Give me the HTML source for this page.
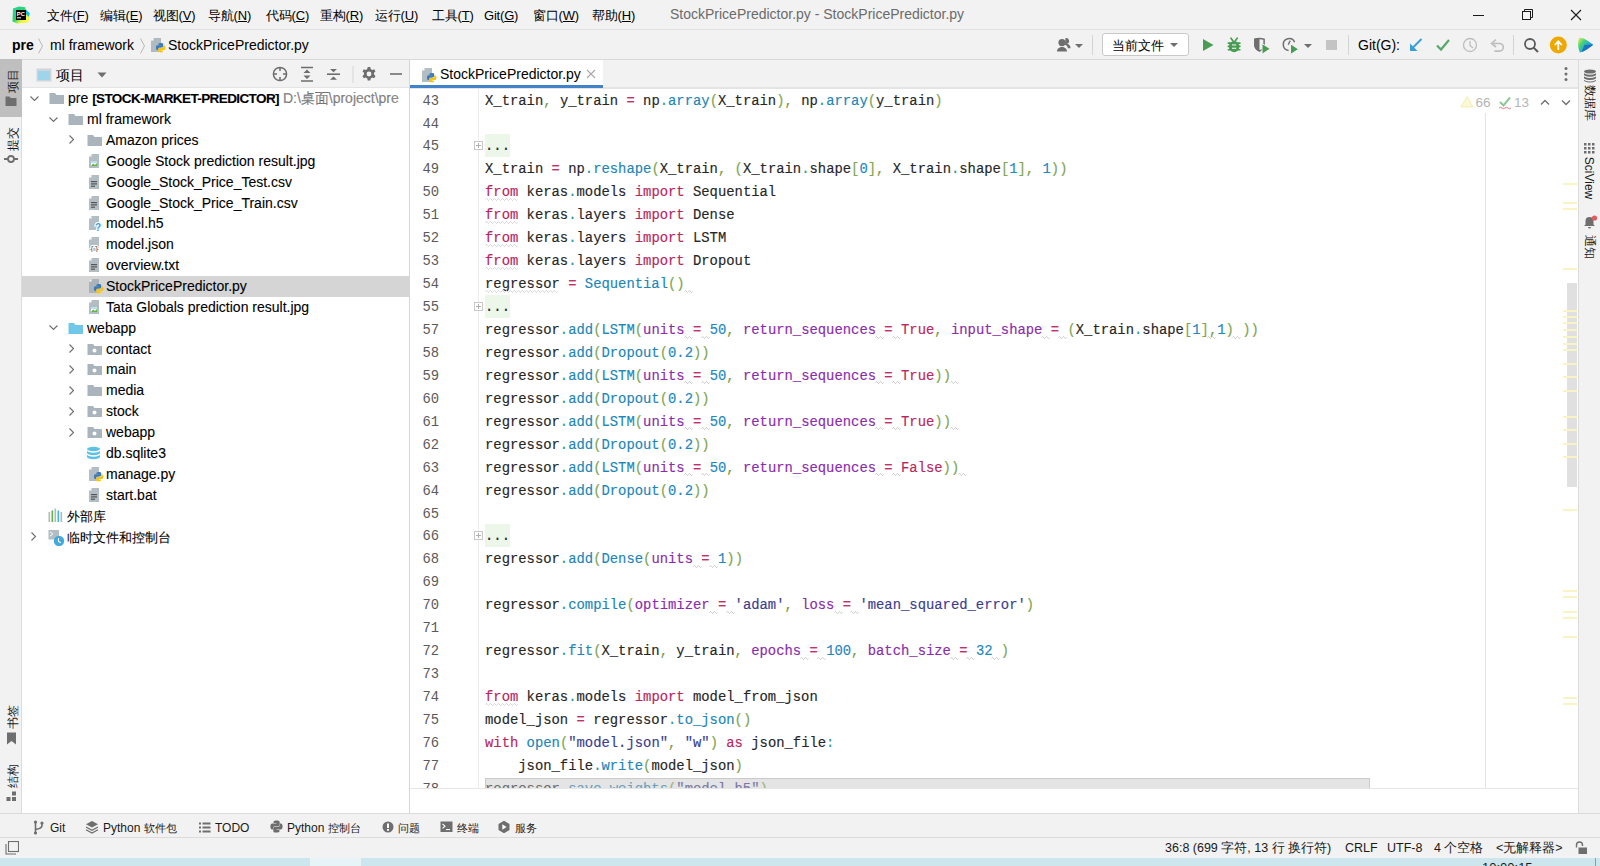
<!DOCTYPE html>
<html><head><meta charset="utf-8">
<style>
*{box-sizing:border-box;margin:0;padding:0}
html,body{width:1600px;height:866px;overflow:hidden;background:#f2f2f2;font-family:"Liberation Sans",sans-serif;font-size:14px;color:#000}
.abs{position:absolute}
#title{left:0;top:0;width:1600px;height:30px;background:#f2f2f2;border-bottom:1px solid #e1e1e1}
#nav{left:0;top:30px;width:1600px;height:30px;background:#f2f2f2;border-bottom:1px solid #d9d9d9}
#lstrip{left:0;top:60px;width:22px;height:754px;background:#f2f2f2;border-right:1px solid #dcdcdc}
#proj{left:22px;top:60px;width:388px;height:754px;background:#fff;border-right:1px solid #d6d6d6}
#projhead{left:0;top:0;width:387px;height:28px;background:#f2f2f2;border-bottom:1px solid #e4e4e4}
#tabs{left:410px;top:60px;width:1168px;height:28px;background:#f2f2f2;border-bottom:1px solid #e4e4e4}
#editor{left:410px;top:88px;width:1168px;height:726px;background:#fff}
#rstrip{left:1578px;top:60px;width:22px;height:754px;background:#f2f2f2;border-left:1px solid #dcdcdc}
#bbar{left:0;top:813px;width:1600px;height:25px;background:#f2f2f2;border-top:1px solid #dcdcdc;border-bottom:1px solid #dcdcdc}
#status{left:0;top:838px;width:1600px;height:20px;background:#f2f2f2}
#taskbar{left:0;top:858px;width:1600px;height:8px;background:#cde6ee}
.menu span{position:absolute;top:8px;font-size:13px;line-height:16px;color:#000;letter-spacing:-0.2px}
.menu u{text-decoration:underline;text-underline-offset:1px}
#wtitle{font-size:14px;color:#6b6b6b;line-height:16px}
.navt{top:7px;font-size:14px;line-height:16px;color:#000}
.tr{font-size:14px;line-height:18px;color:#000;white-space:nowrap;-webkit-text-stroke:0.1px #000}
.ln{position:absolute;left:0;width:29px;text-align:right;font-family:"Liberation Mono",monospace;font-size:13.83px;line-height:22.9px;color:#5a5a5a}
.cl{position:absolute;left:75px;white-space:pre;font-family:"Liberation Mono",monospace;font-size:13.86px;line-height:22.9px;color:#262626;-webkit-text-stroke:0.15px currentColor}
.fold{position:absolute;left:75px;width:25px;height:23px;background:#ecf7ea}
.k{color:#b8265e}.f{color:#2086b8}.p{color:#8a2cac}.n{color:#1e88c0}.s{color:#3b3d8e}.o{color:#c0306a}.d{color:#2a9a9a}.c{color:#7d9a3c}.b{color:#7fa650}
.w{font-style:normal;text-decoration:underline wavy #b8b8b8;text-decoration-thickness:1px;text-underline-offset:3px}
.wf{text-decoration:underline wavy #c8c8c8;text-decoration-thickness:1px;text-underline-offset:3px}
.vl,.vr{display:flex;align-items:center;justify-content:center}
.vl span,.vr span{white-space:nowrap;font-size:11.5px;line-height:14px;color:#1a1a1a;display:block}
.vl span{transform:rotate(-90deg)}
.vr span{transform:rotate(90deg)}
.bt{top:5.5px;font-size:12px;line-height:16px;color:#1a1a1a;white-space:nowrap}
.st{top:2px;font-size:12.5px;line-height:16px;color:#1a1a1a;white-space:nowrap}
.cj{font-size:11px}
.st .cj{font-size:12.6px}
#taskbar{overflow:hidden}
</style></head><body>
<div id="title" class="abs">
<svg class="abs" style="left:11px;top:5px" width="20" height="20" viewBox="0 0 20 20">
<defs><linearGradient id="pcg" x1="0.1" y1="0.2" x2="0.8" y2="0.9"><stop offset="0" stop-color="#21d789"/><stop offset="0.45" stop-color="#2bd36a"/><stop offset="0.75" stop-color="#e8f53c"/><stop offset="1" stop-color="#fcf84a"/></linearGradient></defs>
<path d="M2 3.5 L8 1.5 L13.5 2.2 L14 1.8 L14.8 5 L18.5 8.5 L18.2 14.5 L17 17.8 L8 18.2 L6.5 18.8 L1.5 16.5 Z" fill="url(#pcg)"/>
<path d="M15 4.5 L18.8 8.5 L17.5 12 L15 9z" fill="#07c3f2"/>
<rect x="5" y="5" width="10" height="10" fill="#000"/>
<text x="5.8" y="10.6" font-family="Liberation Sans" font-weight="bold" font-size="5.8" fill="#fff">PC</text>
<rect x="6" y="12.3" width="4" height="1" fill="#fff"/>
</svg>
<div class="menu">
<span style="left:47px">文件(<u>F</u>)</span>
<span style="left:100px">编辑(<u>E</u>)</span>
<span style="left:153px">视图(<u>V</u>)</span>
<span style="left:208px">导航(<u>N</u>)</span>
<span style="left:266px">代码(<u>C</u>)</span>
<span style="left:320px">重构(<u>R</u>)</span>
<span style="left:375px">运行(<u>U</u>)</span>
<span style="left:432px">工具(<u>T</u>)</span>
<span style="left:484px">Git(<u>G</u>)</span>
<span style="left:533px">窗口(<u>W</u>)</span>
<span style="left:592px">帮助(<u>H</u>)</span>
</div>
<span class="abs" id="wtitle" style="left:670px;top:6px">StockPricePredictor.py - StockPricePredictor.py</span>
<svg class="abs" style="left:1470px;top:5px" width="120" height="20" viewBox="0 0 120 20">
<line x1="3" y1="10.5" x2="14" y2="10.5" stroke="#1a1a1a" stroke-width="1"/>
<rect x="52.5" y="6.5" width="8" height="8" fill="none" stroke="#1a1a1a" stroke-width="1"/>
<path d="M54.5 6.5 V4.5 H62.5 V12.5 H60.5" fill="none" stroke="#1a1a1a" stroke-width="1"/>
<path d="M101 5 L111 15 M111 5 L101 15" stroke="#1a1a1a" stroke-width="1.1"/>
</svg>
</div>
<div id="nav" class="abs">
<span class="abs navt" style="left:12px;font-weight:bold">pre</span>
<svg class="abs" style="left:37px;top:7px" width="8" height="18" viewBox="0 0 8 18"><path d="M1.5 1.5 L5.5 9 L1.5 16.5" fill="none" stroke="#b8b8b8" stroke-width="1"/></svg>
<span class="abs navt" style="left:50px">ml framework</span>
<svg class="abs" style="left:139px;top:7px" width="8" height="18" viewBox="0 0 8 18"><path d="M1.5 1.5 L5.5 9 L1.5 16.5" fill="none" stroke="#b8b8b8" stroke-width="1"/></svg>
<svg class="abs" style="left:150px;top:7px" width="16" height="16" viewBox="0 0 16 16"><path d="M3.5 1 H11 V15 H1 V3.5 Z" fill="#9aa7b0" opacity="0.75"/><path d="M1 3.5 L3.5 1 V3.5 Z" fill="#fff"/><g transform="translate(5.6 5.6) scale(0.64)"><path d="M7.9 0.5C4.1 0.5 4.4 2.1 4.4 2.1V3.8H8V4.3H3C3 4.3 0.5 4 0.5 7.9C0.5 11.7 2.7 11.6 2.7 11.6H4V9.8C4 9.8 3.9 7.6 6.2 7.6H9.8C9.8 7.6 11.9 7.6 11.9 5.6V2.3C11.9 2.3 12.2 0.5 7.9 0.5Z" fill="#3d7ab8"/><path d="M8.1 15.5C11.9 15.5 11.6 13.9 11.6 13.9V12.2H8V11.7H13C13 11.7 15.5 12 15.5 8.1C15.5 4.3 13.3 4.4 13.3 4.4H12V6.2C12 6.2 12.1 8.4 9.8 8.4H6.2C6.2 8.4 4.1 8.4 4.1 10.4V13.7C4.1 13.7 3.8 15.5 8.1 15.5Z" fill="#f4c51c"/></g></svg>
<span class="abs navt" style="left:168px">StockPricePredictor.py</span>
<svg class="abs" style="left:1055px;top:36px;top:6px" width="30" height="18" viewBox="0 0 30 18">
<path d="M7 3 a3.6 3.6 0 0 1 0 7.2 a3.6 3.6 0 0 1 0 -7.2z M2 15.5 c0-3 2.5-4.5 5-4.5 s5 1.5 5 4.5z" fill="#6e6e6e"/>
<path d="M10.5 2 a3 3 0 0 1 1.5 5.8 c2.2 0.6 3.5 2 3.5 4.5 h-2.5 c-0.5-2-1.5-3-3-3.5z" fill="#6e6e6e"/>
<path d="M20 8 h8 l-4 4z" fill="#6e6e6e"/>
</svg>
<div class="abs" style="left:1092px;top:5px;width:1px;height:20px;background:#d4d4d4"></div>
<div class="abs" style="left:1102px;top:3px;width:87px;height:23px;background:#fff;border:1px solid #c9c9c9;border-radius:3px"></div>
<span class="abs" style="left:1112px;top:8px;font-size:13px;line-height:16px;color:#000">当前文件</span>
<svg class="abs" style="left:1169px;top:12px" width="10" height="6" viewBox="0 0 10 6"><path d="M1 1 h8 l-4 4z" fill="#6e6e6e"/></svg>
<svg class="abs" style="left:1200px;top:6px" width="120" height="18" viewBox="0 0 120 18">
<path d="M3 3 L13.5 9 L3 15z" fill="#499c54"/>
<g fill="#499c54"><ellipse cx="34.1" cy="10.6" rx="5.3" ry="5.6"/><rect x="27.5" y="6.3" width="13.2" height="1.7" rx=".8"/><rect x="27.5" y="9.6" width="13.2" height="1.7" rx=".8"/><rect x="27.5" y="12.9" width="13.2" height="1.7" rx=".8"/></g>
<path d="M31 2.2 L33.2 5.2 M37.2 2.2 L35 5.2" stroke="#499c54" stroke-width="1.7" stroke-linecap="round"/>
<rect x="32" y="8.4" width="4.2" height="1.1" fill="#f2f2f2"/><rect x="32" y="11.7" width="4.2" height="1.1" fill="#f2f2f2"/>
<path d="M54.9 3.3 Q59.5 1.9 64.1 3.3 V9.3 Q63.9 13.3 59.5 15 Q55.1 13.3 54.9 9.3 Z" fill="none" stroke="#6e6e6e" stroke-width="1.5"/>
<path d="M54.2 2.8 Q57 2 59.5 1.9 V15.6 Q54.5 13.6 54.2 9.3Z" fill="#6e6e6e"/>
<path d="M62 7.5 L70.3 12.8 L62 18.2z" fill="#499c54" stroke="#f2f2f2" stroke-width="1"/>
</svg>
<svg class="abs" style="left:1280px;top:6px" width="60" height="20" viewBox="0 0 60 20">
<path d="M14.6 6.2 A5.9 5.9 0 1 0 8.6 14.4" fill="none" stroke="#6e6e6e" stroke-width="1.5"/>
<path d="M10.2 4.6 L8.2 8.8" fill="none" stroke="#6e6e6e" stroke-width="1.3"/>
<path d="M10.5 7.8 L18.6 13.2 L10.5 18.4z" fill="#499c54" stroke="#f2f2f2" stroke-width="1"/>
<path d="M24 8 h8 l-4 4z" fill="#6e6e6e"/>
<rect x="46" y="4" width="11" height="10" fill="#c4c4c4"/>
</svg>
<div class="abs" style="left:1348px;top:5px;width:1px;height:20px;background:#d4d4d4"></div>
<span class="abs navt" style="left:1358px">Git(G):</span>
<svg class="abs" style="left:1405px;top:6px" width="110" height="18" viewBox="0 0 110 18">
<path d="M16.5 3 L7 12.5" stroke="#389fd6" stroke-width="2"/><path d="M5 7.5 V15 H12.5z" fill="#389fd6"/>
<path d="M32 9.5 L36 13.5 L44 4" fill="none" stroke="#59a869" stroke-width="2.2"/>
<circle cx="65" cy="9" r="6.5" fill="none" stroke="#bdbdbd" stroke-width="1.3"/><path d="M65 5 V9.5 L68 12" fill="none" stroke="#bdbdbd" stroke-width="1.3"/>
<path d="M88 7.5 h6.5 a3.8 3.8 0 0 1 0 7.6 h-5" fill="none" stroke="#bdbdbd" stroke-width="1.6"/><path d="M91 3.5 L86.5 7.5 L91 11" fill="none" stroke="#bdbdbd" stroke-width="1.6"/>
</svg>
<div class="abs" style="left:1513px;top:5px;width:1px;height:20px;background:#d4d4d4"></div>
<svg class="abs" style="left:1520px;top:5px" width="80" height="20" viewBox="0 0 80 20">
<circle cx="10" cy="9" r="5" fill="none" stroke="#5a5a5a" stroke-width="1.8"/><path d="M13.5 12.5 L18 17" stroke="#5a5a5a" stroke-width="2"/>
<circle cx="38.3" cy="10" r="8.5" fill="#eea800"/><path d="M38.3 15 V6.5 M34.8 10 L38.3 6.3 L41.8 10" fill="none" stroke="#fff" stroke-width="1.8"/>
<defs><linearGradient id="lg2" x1="0" y1="0" x2="1" y2="0.8"><stop offset="0" stop-color="#f5f24a"/><stop offset="0.35" stop-color="#46d07c"/><stop offset="0.7" stop-color="#1aa6d6"/><stop offset="1" stop-color="#1560c8"/></linearGradient></defs>
<path d="M59.2 2.8 C63.5 2.5 68.5 6 73.2 9.8 C68.5 13.5 63.5 17.2 59.8 17.4 C57.6 12.5 57.4 7.2 59.2 2.8Z" fill="url(#lg2)"/>
<path d="M64.5 9.8 L73.2 9.8 C69 13 65 16 61.5 17.2Z" fill="#1b5fc0" opacity="0.75"/>
</svg>
</div>
<div id="lstrip" class="abs">
<div class="abs" style="left:0;top:-1px;width:22px;height:58px;background:#bfbfbf"></div>
<div class="abs vl" style="left:5px;top:9px;width:15px;height:24px"><span>项目</span></div>
<svg class="abs" style="left:5px;top:35px" width="12" height="12" viewBox="0 0 12 12"><path d="M0.5 1.5 H4.5 L5.5 3 H11.5 V11 H0.5z" fill="#6e6e6e"/></svg>
<div class="abs vl" style="left:5px;top:67px;width:15px;height:24px"><span>提交</span></div>
<svg class="abs" style="left:4px;top:93px" width="14" height="12" viewBox="0 0 14 12"><circle cx="7" cy="6" r="3" fill="none" stroke="#6e6e6e" stroke-width="1.8"/><path d="M0 6 H4 M10 6 H14" stroke="#6e6e6e" stroke-width="1.8"/></svg>
<div class="abs vl" style="left:5px;top:645px;width:15px;height:24px"><span>书签</span></div>
<svg class="abs" style="left:6px;top:672px" width="11" height="13" viewBox="0 0 11 13"><path d="M1 0.5 H10 V12.5 L5.5 9 L1 12.5z" fill="#6e6e6e"/></svg>
<div class="abs vl" style="left:5px;top:704px;width:15px;height:24px"><span>结构</span></div>
<svg class="abs" style="left:6px;top:731px" width="11" height="11" viewBox="0 0 11 11"><rect x="6" y="0.5" width="4" height="4" fill="#6e6e6e"/><rect x="0.5" y="6" width="4" height="4" fill="#6e6e6e"/><rect x="6" y="6" width="4" height="4" fill="#6e6e6e"/></svg>
</div>
<div id="proj" class="abs"><div id="projhead" class="abs">
<svg class="abs" style="left:14px;top:8px" width="16" height="14" viewBox="0 0 16 14"><rect x="0.5" y="0.5" width="15" height="13" fill="#cfd5d9"/><rect x="2" y="3" width="12" height="9" fill="#9fd5ea"/></svg>
<span class="abs" style="left:34px;top:7px;font-size:14px;line-height:16px">项目</span>
<svg class="abs" style="left:75px;top:12px" width="10" height="6" viewBox="0 0 10 6"><path d="M0.5 0.5 h9 l-4.5 5z" fill="#6e6e6e"/></svg>
<svg class="abs" style="left:248px;top:5px" width="139" height="20" viewBox="0 0 139 20">
<circle cx="10" cy="9" r="6.6" fill="none" stroke="#6e6e6e" stroke-width="1.5"/><path d="M10 2.5 V6 M10 12 V15.5 M3.5 9 H7 M13 9 H16.5" stroke="#6e6e6e" stroke-width="1.5"/>
<path d="M31 2.5 H43 M31 16 H43" stroke="#6e6e6e" stroke-width="1.6"/><path d="M33.5 8 L37 4.5 L40.5 8z M33.5 10.5 L37 14 L40.5 10.5z" fill="#6e6e6e"/>
<path d="M57 9.2 H70" stroke="#6e6e6e" stroke-width="1.6"/><path d="M60 4 L63.5 7.2 L67 4z M60 14.8 L63.5 11.6 L67 14.8z" fill="#6e6e6e"/>
<rect x="82.5" y="1" width="1" height="17" fill="#d6d6d6"/>
<g transform="translate(99 9)"><path d="M-1.3 -7 h2.6 l0.4 2 l1.6 0.9 l1.9 -0.7 l1.3 2.2 l-1.5 1.4 v1.8 l1.5 1.4 l-1.3 2.2 l-1.9 -0.7 l-1.6 0.9 l-0.4 2 h-2.6 l-0.4 -2 l-1.6 -0.9 l-1.9 0.7 l-1.3 -2.2 l1.5 -1.4 v-1.8 l-1.5 -1.4 l1.3 -2.2 l1.9 0.7 l1.6 -0.9z" fill="#6e6e6e"/><circle r="2.4" fill="#f3f3f3"/></g>
<path d="M120 9 H132" stroke="#6e6e6e" stroke-width="1.6"/>
</svg>
</div>
<div class="abs" style="left:0;top:0;width:387px;height:754px;overflow:hidden">
<div class="abs" style="left:0;top:216.3px;width:387px;height:20.86px;background:#d5d5d5"></div>
<svg class="abs" style="left:7.0px;top:32.7px" width="11" height="11" viewBox="0 0 11 11"><path d="M1.5 3.5 L5.5 7.5 L9.5 3.5" fill="none" stroke="#6e6e6e" stroke-width="1.1"/></svg>
<svg class="abs" style="left:27px;top:32.2px" width="16" height="13" viewBox="0 0 16 13"><path d="M0.5 1 H6 L7.5 3 H15 V12 H0.5 Z" fill="#9aa7b0" opacity="0.85"/></svg>
<span class="abs tr" style="left:46px;top:29.2px">pre <b style="font-size:13.5px;letter-spacing:-0.6px">[STOCK-MARKET-PREDICTOR]</b> <span style="color:#8c8c8c">D:\桌面\project\pre</span></span>
<svg class="abs" style="left:26.0px;top:53.6px" width="11" height="11" viewBox="0 0 11 11"><path d="M1.5 3.5 L5.5 7.5 L9.5 3.5" fill="none" stroke="#6e6e6e" stroke-width="1.1"/></svg>
<svg class="abs" style="left:46px;top:53.1px" width="16" height="13" viewBox="0 0 16 13"><path d="M0.5 1 H6 L7.5 3 H15 V12 H0.5 Z" fill="#9aa7b0" opacity="0.85"/></svg>
<span class="abs tr" style="left:65px;top:50.1px">ml framework</span>
<svg class="abs" style="left:43.5px;top:74.4px" width="11" height="11" viewBox="0 0 11 11"><path d="M3.5 1.5 L7.5 5.5 L3.5 9.5" fill="none" stroke="#6e6e6e" stroke-width="1.1"/></svg>
<svg class="abs" style="left:65px;top:73.9px" width="16" height="13" viewBox="0 0 16 13"><path d="M0.5 1 H6 L7.5 3 H15 V12 H0.5 Z" fill="#9aa7b0" opacity="0.85"/></svg>
<span class="abs tr" style="left:84px;top:70.9px">Amazon prices</span>
<svg class="abs" style="left:66px;top:92.8px" width="16" height="16" viewBox="0 0 16 16"><path d="M3.5 1 H11 V15 H1 V3.5 Z" fill="#9aa7b0" opacity="0.75"/><path d="M1 3.5 L3.5 1 V3.5 Z" fill="#fff"/><rect x="3" y="8" width="6" height="5" fill="#fff"/><path d="M3 13 L5 10.5 L7 12 L9 10 V13Z" fill="#62b543"/><rect x="3" y="8" width="6" height="2" fill="#b8e0f0"/></svg>
<span class="abs tr" style="left:84px;top:91.8px">Google Stock prediction result.jpg</span>
<svg class="abs" style="left:66px;top:113.6px" width="16" height="16" viewBox="0 0 16 16"><path d="M3.5 1 H11 V15 H1 V3.5 Z" fill="#9aa7b0" opacity="0.75"/><path d="M1 3.5 L3.5 1 V3.5 Z" fill="#fff"/><rect x="3" y="7" width="6" height="1.2" fill="#555"/><rect x="3" y="9.3" width="6" height="1.2" fill="#555"/><rect x="3" y="11.6" width="4" height="1.2" fill="#555"/></svg>
<span class="abs tr" style="left:84px;top:112.6px">Google_Stock_Price_Test.csv</span>
<svg class="abs" style="left:66px;top:134.5px" width="16" height="16" viewBox="0 0 16 16"><path d="M3.5 1 H11 V15 H1 V3.5 Z" fill="#9aa7b0" opacity="0.75"/><path d="M1 3.5 L3.5 1 V3.5 Z" fill="#fff"/><rect x="3" y="7" width="6" height="1.2" fill="#555"/><rect x="3" y="9.3" width="6" height="1.2" fill="#555"/><rect x="3" y="11.6" width="4" height="1.2" fill="#555"/></svg>
<span class="abs tr" style="left:84px;top:133.5px">Google_Stock_Price_Train.csv</span>
<svg class="abs" style="left:66px;top:155.4px" width="16" height="16" viewBox="0 0 16 16"><path d="M3.5 1 H11 V15 H1 V3.5 Z" fill="#9aa7b0" opacity="0.75"/><path d="M1 3.5 L3.5 1 V3.5 Z" fill="#fff"/><text x="7" y="15.5" font-family="Liberation Sans" font-size="10" font-weight="bold" fill="#fff" stroke="#fff" stroke-width="2">?</text><text x="7" y="15.5" font-family="Liberation Sans" font-size="10" font-weight="bold" fill="#389fd6">?</text></svg>
<span class="abs tr" style="left:84px;top:154.4px">model.h5</span>
<svg class="abs" style="left:66px;top:176.2px" width="16" height="16" viewBox="0 0 16 16"><path d="M3.5 1 H11 V15 H1 V3.5 Z" fill="#9aa7b0" opacity="0.75"/><path d="M1 3.5 L3.5 1 V3.5 Z" fill="#fff"/><text x="1.5" y="14.5" font-family="Liberation Mono" font-size="8" font-weight="bold" fill="#fff" stroke="#fff" stroke-width="2">{}</text><text x="1.5" y="14.5" font-family="Liberation Mono" font-size="8" fill="#555">{}</text></svg>
<span class="abs tr" style="left:84px;top:175.2px">model.json</span>
<svg class="abs" style="left:66px;top:197.1px" width="16" height="16" viewBox="0 0 16 16"><path d="M3.5 1 H11 V15 H1 V3.5 Z" fill="#9aa7b0" opacity="0.75"/><path d="M1 3.5 L3.5 1 V3.5 Z" fill="#fff"/><rect x="3" y="7" width="6" height="1.2" fill="#555"/><rect x="3" y="9.3" width="6" height="1.2" fill="#555"/><rect x="3" y="11.6" width="4" height="1.2" fill="#555"/></svg>
<span class="abs tr" style="left:84px;top:196.1px">overview.txt</span>
<svg class="abs" style="left:66px;top:217.9px" width="16" height="16" viewBox="0 0 16 16"><path d="M3.5 1 H11 V15 H1 V3.5 Z" fill="#9aa7b0" opacity="0.75"/><path d="M1 3.5 L3.5 1 V3.5 Z" fill="#fff"/><g transform="translate(5.6 5.6) scale(0.64)"><path d="M7.9 0.5C4.1 0.5 4.4 2.1 4.4 2.1V3.8H8V4.3H3C3 4.3 0.5 4 0.5 7.9C0.5 11.7 2.7 11.6 2.7 11.6H4V9.8C4 9.8 3.9 7.6 6.2 7.6H9.8C9.8 7.6 11.9 7.6 11.9 5.6V2.3C11.9 2.3 12.2 0.5 7.9 0.5Z" fill="#3d7ab8"/><path d="M8.1 15.5C11.9 15.5 11.6 13.9 11.6 13.9V12.2H8V11.7H13C13 11.7 15.5 12 15.5 8.1C15.5 4.3 13.3 4.4 13.3 4.4H12V6.2C12 6.2 12.1 8.4 9.8 8.4H6.2C6.2 8.4 4.1 8.4 4.1 10.4V13.7C4.1 13.7 3.8 15.5 8.1 15.5Z" fill="#f4c51c"/></g></svg>
<span class="abs tr" style="left:84px;top:216.9px">StockPricePredictor.py</span>
<svg class="abs" style="left:66px;top:238.8px" width="16" height="16" viewBox="0 0 16 16"><path d="M3.5 1 H11 V15 H1 V3.5 Z" fill="#9aa7b0" opacity="0.75"/><path d="M1 3.5 L3.5 1 V3.5 Z" fill="#fff"/><rect x="3" y="8" width="6" height="5" fill="#fff"/><path d="M3 13 L5 10.5 L7 12 L9 10 V13Z" fill="#62b543"/><rect x="3" y="8" width="6" height="2" fill="#b8e0f0"/></svg>
<span class="abs tr" style="left:84px;top:237.8px">Tata Globals prediction result.jpg</span>
<svg class="abs" style="left:26.0px;top:262.2px" width="11" height="11" viewBox="0 0 11 11"><path d="M1.5 3.5 L5.5 7.5 L9.5 3.5" fill="none" stroke="#6e6e6e" stroke-width="1.1"/></svg>
<svg class="abs" style="left:46px;top:261.7px" width="16" height="13" viewBox="0 0 16 13"><path d="M0.5 1 H6 L7.5 3 H15 V12 H0.5 Z" fill="#40b6e0" opacity="0.75"/></svg>
<span class="abs tr" style="left:65px;top:258.7px">webapp</span>
<svg class="abs" style="left:43.5px;top:283.0px" width="11" height="11" viewBox="0 0 11 11"><path d="M3.5 1.5 L7.5 5.5 L3.5 9.5" fill="none" stroke="#6e6e6e" stroke-width="1.1"/></svg>
<svg class="abs" style="left:65px;top:282.5px" width="16" height="13" viewBox="0 0 16 13"><path d="M0.5 1 H6 L7.5 3 H15 V12 H0.5 Z" fill="#9aa7b0" opacity="0.85"/><circle cx="7.5" cy="7.5" r="2" fill="#fff"/></svg>
<span class="abs tr" style="left:84px;top:279.5px">contact</span>
<svg class="abs" style="left:43.5px;top:303.9px" width="11" height="11" viewBox="0 0 11 11"><path d="M3.5 1.5 L7.5 5.5 L3.5 9.5" fill="none" stroke="#6e6e6e" stroke-width="1.1"/></svg>
<svg class="abs" style="left:65px;top:303.4px" width="16" height="13" viewBox="0 0 16 13"><path d="M0.5 1 H6 L7.5 3 H15 V12 H0.5 Z" fill="#9aa7b0" opacity="0.85"/><circle cx="7.5" cy="7.5" r="2" fill="#fff"/></svg>
<span class="abs tr" style="left:84px;top:300.4px">main</span>
<svg class="abs" style="left:43.5px;top:324.7px" width="11" height="11" viewBox="0 0 11 11"><path d="M3.5 1.5 L7.5 5.5 L3.5 9.5" fill="none" stroke="#6e6e6e" stroke-width="1.1"/></svg>
<svg class="abs" style="left:65px;top:324.2px" width="16" height="13" viewBox="0 0 16 13"><path d="M0.5 1 H6 L7.5 3 H15 V12 H0.5 Z" fill="#9aa7b0" opacity="0.85"/></svg>
<span class="abs tr" style="left:84px;top:321.2px">media</span>
<svg class="abs" style="left:43.5px;top:345.6px" width="11" height="11" viewBox="0 0 11 11"><path d="M3.5 1.5 L7.5 5.5 L3.5 9.5" fill="none" stroke="#6e6e6e" stroke-width="1.1"/></svg>
<svg class="abs" style="left:65px;top:345.1px" width="16" height="13" viewBox="0 0 16 13"><path d="M0.5 1 H6 L7.5 3 H15 V12 H0.5 Z" fill="#9aa7b0" opacity="0.85"/><circle cx="7.5" cy="7.5" r="2" fill="#fff"/></svg>
<span class="abs tr" style="left:84px;top:342.1px">stock</span>
<svg class="abs" style="left:43.5px;top:366.5px" width="11" height="11" viewBox="0 0 11 11"><path d="M3.5 1.5 L7.5 5.5 L3.5 9.5" fill="none" stroke="#6e6e6e" stroke-width="1.1"/></svg>
<svg class="abs" style="left:65px;top:366.0px" width="16" height="13" viewBox="0 0 16 13"><path d="M0.5 1 H6 L7.5 3 H15 V12 H0.5 Z" fill="#9aa7b0" opacity="0.85"/><circle cx="7.5" cy="7.5" r="2" fill="#fff"/></svg>
<span class="abs tr" style="left:84px;top:363.0px">webapp</span>
<svg class="abs" style="left:64px;top:385.8px" width="17" height="17" viewBox="0 0 17 17"><ellipse cx="7.5" cy="3" rx="6.5" ry="2.2" fill="#40b6e0" opacity="0.85"/><path d="M1 4.5 v2.5 a6.5 2.2 0 0 0 13 0 v-2.5 a6.5 2.2 0 0 1 -13 0z" fill="#40b6e0" opacity="0.85"/><path d="M1 8.5 v2.5 a6.5 2.2 0 0 0 13 0 v-2.5 a6.5 2.2 0 0 1 -13 0z" fill="#40b6e0" opacity="0.85"/></svg>
<span class="abs tr" style="left:84px;top:383.8px">db.sqlite3</span>
<svg class="abs" style="left:66px;top:405.7px" width="16" height="16" viewBox="0 0 16 16"><path d="M3.5 1 H11 V15 H1 V3.5 Z" fill="#9aa7b0" opacity="0.75"/><path d="M1 3.5 L3.5 1 V3.5 Z" fill="#fff"/><g transform="translate(5.6 5.6) scale(0.64)"><path d="M7.9 0.5C4.1 0.5 4.4 2.1 4.4 2.1V3.8H8V4.3H3C3 4.3 0.5 4 0.5 7.9C0.5 11.7 2.7 11.6 2.7 11.6H4V9.8C4 9.8 3.9 7.6 6.2 7.6H9.8C9.8 7.6 11.9 7.6 11.9 5.6V2.3C11.9 2.3 12.2 0.5 7.9 0.5Z" fill="#3d7ab8"/><path d="M8.1 15.5C11.9 15.5 11.6 13.9 11.6 13.9V12.2H8V11.7H13C13 11.7 15.5 12 15.5 8.1C15.5 4.3 13.3 4.4 13.3 4.4H12V6.2C12 6.2 12.1 8.4 9.8 8.4H6.2C6.2 8.4 4.1 8.4 4.1 10.4V13.7C4.1 13.7 3.8 15.5 8.1 15.5Z" fill="#f4c51c"/></g></svg>
<span class="abs tr" style="left:84px;top:404.7px">manage.py</span>
<svg class="abs" style="left:66px;top:426.5px" width="16" height="16" viewBox="0 0 16 16"><path d="M3.5 1 H11 V15 H1 V3.5 Z" fill="#9aa7b0" opacity="0.75"/><path d="M1 3.5 L3.5 1 V3.5 Z" fill="#fff"/><rect x="3" y="7" width="6" height="1.2" fill="#555"/><rect x="3" y="9.3" width="6" height="1.2" fill="#555"/><rect x="3" y="11.6" width="4" height="1.2" fill="#555"/></svg>
<span class="abs tr" style="left:84px;top:425.5px">start.bat</span>
<svg class="abs" style="left:26px;top:448.4px" width="17" height="17" viewBox="0 0 17 17"><rect x="0.5" y="4" width="1.6" height="10" fill="#9aa7b0" opacity=".8"/><rect x="3.5" y="2.5" width="1.6" height="11.5" fill="#62b543"/><rect x="6.5" y="0.5" width="1.6" height="13.5" fill="#9aa7b0" opacity=".8"/><rect x="9.5" y="2.5" width="1.6" height="11.5" fill="#40b6e0"/><rect x="12.5" y="4" width="1.6" height="10" fill="#9aa7b0" opacity=".8"/></svg>
<span class="abs tr" style="left:45px;top:447.9px;font-size:12.5px">外部库</span>
<svg class="abs" style="left:5.5px;top:470.8px" width="11" height="11" viewBox="0 0 11 11"><path d="M3.5 1.5 L7.5 5.5 L3.5 9.5" fill="none" stroke="#6e6e6e" stroke-width="1.1"/></svg>
<svg class="abs" style="left:26px;top:469.3px" width="17" height="17" viewBox="0 0 17 17"><path d="M0.5 1 H11 V10.5 H0.5Z" fill="#9aa7b0" opacity=".75"/><path d="M2 2.8 L4.8 5 L2 7.2" fill="none" stroke="#fff" stroke-width="1"/><circle cx="11" cy="12" r="5.2" fill="#40a9e0"/><path d="M10.5 9 V12.5 L12.8 13.8" fill="none" stroke="#fff" stroke-width="1.1"/></svg>
<span class="abs tr" style="left:45px;top:468.8px;font-size:12.5px">临时文件和控制台</span>
</div></div>
<div id="tabs" class="abs">
<div class="abs" style="left:0;top:0;width:193px;height:25px;background:#fff"></div>
<div class="abs" style="left:0;top:25px;width:193px;height:3px;background:#4083c9"></div>
<svg class="abs" style="left:11px;top:7px" width="16" height="16" viewBox="0 0 16 16"><path d="M3.5 1 H11 V15 H1 V3.5 Z" fill="#9aa7b0" opacity="0.75"/><path d="M1 3.5 L3.5 1 V3.5 Z" fill="#fff"/><g transform="translate(5.6 5.6) scale(0.64)"><path d="M7.9 0.5C4.1 0.5 4.4 2.1 4.4 2.1V3.8H8V4.3H3C3 4.3 0.5 4 0.5 7.9C0.5 11.7 2.7 11.6 2.7 11.6H4V9.8C4 9.8 3.9 7.6 6.2 7.6H9.8C9.8 7.6 11.9 7.6 11.9 5.6V2.3C11.9 2.3 12.2 0.5 7.9 0.5Z" fill="#3d7ab8"/><path d="M8.1 15.5C11.9 15.5 11.6 13.9 11.6 13.9V12.2H8V11.7H13C13 11.7 15.5 12 15.5 8.1C15.5 4.3 13.3 4.4 13.3 4.4H12V6.2C12 6.2 12.1 8.4 9.8 8.4H6.2C6.2 8.4 4.1 8.4 4.1 10.4V13.7C4.1 13.7 3.8 15.5 8.1 15.5Z" fill="#f4c51c"/></g></svg>
<span class="abs" style="left:30px;top:6px;font-size:14px;line-height:16px;color:#000">StockPricePredictor.py</span>
<svg class="abs" style="left:176px;top:9px" width="10" height="10" viewBox="0 0 10 10"><path d="M1 1 L9 9 M9 1 L1 9" stroke="#a8a8a8" stroke-width="1.1"/></svg>
<svg class="abs" style="left:1153px;top:6px" width="6" height="16" viewBox="0 0 6 16"><circle cx="3" cy="2.5" r="1.5" fill="#6e6e6e"/><circle cx="3" cy="8" r="1.5" fill="#6e6e6e"/><circle cx="3" cy="13.5" r="1.5" fill="#6e6e6e"/></svg>
</div>
<div id="editor" class="abs">
<div class="abs" style="left:0;top:0;width:1168px;height:1px;background:#e4e4e4"></div>
<div class="abs" style="left:0;top:0;width:1168px;height:700px;overflow:hidden">
<div class="abs" style="left:68px;top:1px;width:1px;height:700px;background:#ececec"></div>
<div class="abs" style="left:1075px;top:25px;width:1px;height:676px;background:#e4e4e4"></div>
<div class="ln" style="top:1.6px">43</div>
<div class="ln" style="top:24.54px">44</div>
<div class="ln" style="top:47.48px">45</div>
<div class="ln" style="top:70.42px">49</div>
<div class="ln" style="top:93.36px">50</div>
<div class="ln" style="top:116.3px">51</div>
<div class="ln" style="top:139.24px">52</div>
<div class="ln" style="top:162.18px">53</div>
<div class="ln" style="top:185.12px">54</div>
<div class="ln" style="top:208.06px">55</div>
<div class="ln" style="top:231.0px">57</div>
<div class="ln" style="top:253.94px">58</div>
<div class="ln" style="top:276.88px">59</div>
<div class="ln" style="top:299.82px">60</div>
<div class="ln" style="top:322.76px">61</div>
<div class="ln" style="top:345.7px">62</div>
<div class="ln" style="top:368.64px">63</div>
<div class="ln" style="top:391.58px">64</div>
<div class="ln" style="top:414.52px">65</div>
<div class="ln" style="top:437.46px">66</div>
<div class="ln" style="top:460.4px">68</div>
<div class="ln" style="top:483.34px">69</div>
<div class="ln" style="top:506.28px">70</div>
<div class="ln" style="top:529.22px">71</div>
<div class="ln" style="top:552.16px">72</div>
<div class="ln" style="top:575.1px">73</div>
<div class="ln" style="top:598.04px">74</div>
<div class="ln" style="top:620.98px">75</div>
<div class="ln" style="top:643.92px">76</div>
<div class="ln" style="top:666.86px">77</div>
<div class="ln" style="top:689.8px">78</div>
<div class="cl" style="top:1.6px">X_train<span class="c">,</span> y_train <span class="o">=</span> np<span class="d">.</span><span class="f">array</span><span class="b">(</span>X_train<span class="b">)</span><span class="c">,</span> np<span class="d">.</span><span class="f">array</span><span class="b">(</span>y_train<span class="b">)</span></div>
<div class="cl" style="top:24.54px"></div>
<div class="fold" style="top:46.18px"></div>
<svg class="abs" style="left:64px;top:53.48px" width="9" height="9" viewBox="0 0 9 9"><rect x="0.5" y="0.5" width="8" height="8" fill="#fff" stroke="#c8c8c8"/><path d="M2 4.5 H7 M4.5 2 V7" stroke="#b0b0b0"/></svg>
<div class="cl" style="top:47.48px">...</div>
<div class="cl" style="top:70.42px">X_train <span class="o">=</span> np<span class="d">.</span><span class="f">reshape</span><span class="b">(</span>X_train<span class="c">,</span> <span class="b">(</span>X_train<span class="d">.</span>shape<span class="b">[</span><span class="n">0</span><span class="b">]</span><span class="c">,</span> X_train<span class="d">.</span>shape<span class="b">[</span><span class="n">1</span><span class="b">]</span><span class="c">,</span> <span class="n">1</span><span class="b">)</span><span class="b">)</span></div>
<div class="cl" style="top:93.36px"><span class="k">from</span> keras<span class="d">.</span>models <span class="k">import</span> Sequential</div>
<svg class="abs" style="left:75.0px;top:108.9px" width="34" height="4" viewBox="0 0 34 4"><path d="M0.5 2.5 q1 -2 2 0 t2 0 t2 0 t2 0 t2 0 t2 0 t2 0 t2 0 t2 0 t2 0 t2 0 t2 0 t2 0 t2 0 t2 0 t2 0" fill="none" stroke="#c4c4c4" stroke-width="0.8"/></svg>
<div class="cl" style="top:116.3px"><span class="k">from</span> keras<span class="d">.</span>layers <span class="k">import</span> Dense</div>
<svg class="abs" style="left:75.0px;top:131.8px" width="34" height="4" viewBox="0 0 34 4"><path d="M0.5 2.5 q1 -2 2 0 t2 0 t2 0 t2 0 t2 0 t2 0 t2 0 t2 0 t2 0 t2 0 t2 0 t2 0 t2 0 t2 0 t2 0 t2 0" fill="none" stroke="#c4c4c4" stroke-width="0.8"/></svg>
<div class="cl" style="top:139.24px"><span class="k">from</span> keras<span class="d">.</span>layers <span class="k">import</span> LSTM</div>
<svg class="abs" style="left:75.0px;top:154.7px" width="34" height="4" viewBox="0 0 34 4"><path d="M0.5 2.5 q1 -2 2 0 t2 0 t2 0 t2 0 t2 0 t2 0 t2 0 t2 0 t2 0 t2 0 t2 0 t2 0 t2 0 t2 0 t2 0 t2 0" fill="none" stroke="#c4c4c4" stroke-width="0.8"/></svg>
<div class="cl" style="top:162.18px"><span class="k">from</span> keras<span class="d">.</span>layers <span class="k">import</span> Dropout</div>
<svg class="abs" style="left:75.0px;top:177.7px" width="34" height="4" viewBox="0 0 34 4"><path d="M0.5 2.5 q1 -2 2 0 t2 0 t2 0 t2 0 t2 0 t2 0 t2 0 t2 0 t2 0 t2 0 t2 0 t2 0 t2 0 t2 0 t2 0 t2 0" fill="none" stroke="#c4c4c4" stroke-width="0.8"/></svg>
<div class="cl" style="top:185.12px">regressor <span class="o">=</span> <span class="f">Sequential</span><span class="b">(</span><span class="b">)</span></div>
<svg class="abs" style="left:75px;top:200.6px" width="75" height="4" viewBox="0 0 75 4"><path d="M0.5 2.5 q1 -2 2 0 t2 0 q1 -2 2 0 t2 0 q1 -2 2 0 t2 0 q1 -2 2 0 t2 0 q1 -2 2 0 t2 0 q1 -2 2 0 t2 0 q1 -2 2 0 t2 0 q1 -2 2 0 t2 0 q1 -2 2 0 t2 0 q1 -2 2 0 t2 0 q1 -2 2 0 t2 0 q1 -2 2 0 t2 0 q1 -2 2 0 t2 0 q1 -2 2 0 t2 0 q1 -2 2 0 t2 0 q1 -2 2 0 t2 0 q1 -2 2 0 t2 0 q1 -2 2 0 t2 0 " fill="none" stroke="#c4c4c4" stroke-width="0.8"/></svg>
<svg class="abs" style="left:274.2px;top:200.6px" width="9" height="4" viewBox="0 0 9 4"><path d="M0.5 2.5 q1 -2 2 0 t2 0 t2 0 t2 0" fill="none" stroke="#b4b4b4" stroke-width="0.8"/></svg>
<div class="fold" style="top:206.76px"></div>
<svg class="abs" style="left:64px;top:214.06px" width="9" height="9" viewBox="0 0 9 9"><rect x="0.5" y="0.5" width="8" height="8" fill="#fff" stroke="#c8c8c8"/><path d="M2 4.5 H7 M4.5 2 V7" stroke="#b0b0b0"/></svg>
<div class="cl" style="top:208.06px">...</div>
<div class="cl" style="top:231.0px">regressor<span class="d">.</span><span class="f">add</span><span class="b">(</span><span class="f">LSTM</span><span class="b">(</span><span class="p">units</span> <span class="o">=</span> <span class="n">50</span><span class="c">,</span> <span class="p">return_sequences</span> <span class="o">=</span> <span class="k">True</span><span class="c">,</span> <span class="p">input_shape</span> <span class="o">=</span> <span class="b">(</span>X_train<span class="d">.</span>shape<span class="b">[</span><span class="n">1</span><span class="b">]</span><span class="c">,</span><span class="n">1</span><span class="b">)</span> <span class="b">)</span><span class="b">)</span></div>
<svg class="abs" style="left:274.2px;top:246.5px" width="9" height="4" viewBox="0 0 9 4"><path d="M0.5 2.5 q1 -2 2 0 t2 0 t2 0 t2 0" fill="none" stroke="#b4b4b4" stroke-width="0.8"/></svg>
<svg class="abs" style="left:290.8px;top:246.5px" width="9" height="4" viewBox="0 0 9 4"><path d="M0.5 2.5 q1 -2 2 0 t2 0 t2 0 t2 0" fill="none" stroke="#b4b4b4" stroke-width="0.8"/></svg>
<svg class="abs" style="left:465.1px;top:246.5px" width="9" height="4" viewBox="0 0 9 4"><path d="M0.5 2.5 q1 -2 2 0 t2 0 t2 0 t2 0" fill="none" stroke="#b4b4b4" stroke-width="0.8"/></svg>
<svg class="abs" style="left:481.7px;top:246.5px" width="9" height="4" viewBox="0 0 9 4"><path d="M0.5 2.5 q1 -2 2 0 t2 0 t2 0 t2 0" fill="none" stroke="#b4b4b4" stroke-width="0.8"/></svg>
<svg class="abs" style="left:631.1px;top:246.5px" width="9" height="4" viewBox="0 0 9 4"><path d="M0.5 2.5 q1 -2 2 0 t2 0 t2 0 t2 0" fill="none" stroke="#b4b4b4" stroke-width="0.8"/></svg>
<svg class="abs" style="left:647.7px;top:246.5px" width="9" height="4" viewBox="0 0 9 4"><path d="M0.5 2.5 q1 -2 2 0 t2 0 t2 0 t2 0" fill="none" stroke="#b4b4b4" stroke-width="0.8"/></svg>
<svg class="abs" style="left:797.1px;top:246.5px" width="9" height="4" viewBox="0 0 9 4"><path d="M0.5 2.5 q1 -2 2 0 t2 0 t2 0 t2 0" fill="none" stroke="#b4b4b4" stroke-width="0.8"/></svg>
<svg class="abs" style="left:822.0px;top:246.5px" width="9" height="4" viewBox="0 0 9 4"><path d="M0.5 2.5 q1 -2 2 0 t2 0 t2 0 t2 0" fill="none" stroke="#b4b4b4" stroke-width="0.8"/></svg>
<div class="cl" style="top:253.94px">regressor<span class="d">.</span><span class="f">add</span><span class="b">(</span><span class="f">Dropout</span><span class="b">(</span><span class="n">0.2</span><span class="b">)</span><span class="b">)</span></div>
<div class="cl" style="top:276.88px">regressor<span class="d">.</span><span class="f">add</span><span class="b">(</span><span class="f">LSTM</span><span class="b">(</span><span class="p">units</span> <span class="o">=</span> <span class="n">50</span><span class="c">,</span> <span class="p">return_sequences</span> <span class="o">=</span> <span class="k">True</span><span class="b">)</span><span class="b">)</span></div>
<svg class="abs" style="left:274.2px;top:292.4px" width="9" height="4" viewBox="0 0 9 4"><path d="M0.5 2.5 q1 -2 2 0 t2 0 t2 0 t2 0" fill="none" stroke="#b4b4b4" stroke-width="0.8"/></svg>
<svg class="abs" style="left:290.8px;top:292.4px" width="9" height="4" viewBox="0 0 9 4"><path d="M0.5 2.5 q1 -2 2 0 t2 0 t2 0 t2 0" fill="none" stroke="#b4b4b4" stroke-width="0.8"/></svg>
<svg class="abs" style="left:465.1px;top:292.4px" width="9" height="4" viewBox="0 0 9 4"><path d="M0.5 2.5 q1 -2 2 0 t2 0 t2 0 t2 0" fill="none" stroke="#b4b4b4" stroke-width="0.8"/></svg>
<svg class="abs" style="left:481.7px;top:292.4px" width="9" height="4" viewBox="0 0 9 4"><path d="M0.5 2.5 q1 -2 2 0 t2 0 t2 0 t2 0" fill="none" stroke="#b4b4b4" stroke-width="0.8"/></svg>
<svg class="abs" style="left:539.8px;top:292.4px" width="9" height="4" viewBox="0 0 9 4"><path d="M0.5 2.5 q1 -2 2 0 t2 0 t2 0 t2 0" fill="none" stroke="#b4b4b4" stroke-width="0.8"/></svg>
<div class="cl" style="top:299.82px">regressor<span class="d">.</span><span class="f">add</span><span class="b">(</span><span class="f">Dropout</span><span class="b">(</span><span class="n">0.2</span><span class="b">)</span><span class="b">)</span></div>
<div class="cl" style="top:322.76px">regressor<span class="d">.</span><span class="f">add</span><span class="b">(</span><span class="f">LSTM</span><span class="b">(</span><span class="p">units</span> <span class="o">=</span> <span class="n">50</span><span class="c">,</span> <span class="p">return_sequences</span> <span class="o">=</span> <span class="k">True</span><span class="b">)</span><span class="b">)</span></div>
<svg class="abs" style="left:274.2px;top:338.3px" width="9" height="4" viewBox="0 0 9 4"><path d="M0.5 2.5 q1 -2 2 0 t2 0 t2 0 t2 0" fill="none" stroke="#b4b4b4" stroke-width="0.8"/></svg>
<svg class="abs" style="left:290.8px;top:338.3px" width="9" height="4" viewBox="0 0 9 4"><path d="M0.5 2.5 q1 -2 2 0 t2 0 t2 0 t2 0" fill="none" stroke="#b4b4b4" stroke-width="0.8"/></svg>
<svg class="abs" style="left:465.1px;top:338.3px" width="9" height="4" viewBox="0 0 9 4"><path d="M0.5 2.5 q1 -2 2 0 t2 0 t2 0 t2 0" fill="none" stroke="#b4b4b4" stroke-width="0.8"/></svg>
<svg class="abs" style="left:481.7px;top:338.3px" width="9" height="4" viewBox="0 0 9 4"><path d="M0.5 2.5 q1 -2 2 0 t2 0 t2 0 t2 0" fill="none" stroke="#b4b4b4" stroke-width="0.8"/></svg>
<svg class="abs" style="left:539.8px;top:338.3px" width="9" height="4" viewBox="0 0 9 4"><path d="M0.5 2.5 q1 -2 2 0 t2 0 t2 0 t2 0" fill="none" stroke="#b4b4b4" stroke-width="0.8"/></svg>
<div class="cl" style="top:345.7px">regressor<span class="d">.</span><span class="f">add</span><span class="b">(</span><span class="f">Dropout</span><span class="b">(</span><span class="n">0.2</span><span class="b">)</span><span class="b">)</span></div>
<div class="cl" style="top:368.64px">regressor<span class="d">.</span><span class="f">add</span><span class="b">(</span><span class="f">LSTM</span><span class="b">(</span><span class="p">units</span> <span class="o">=</span> <span class="n">50</span><span class="c">,</span> <span class="p">return_sequences</span> <span class="o">=</span> <span class="k">False</span><span class="b">)</span><span class="b">)</span></div>
<svg class="abs" style="left:274.2px;top:384.1px" width="9" height="4" viewBox="0 0 9 4"><path d="M0.5 2.5 q1 -2 2 0 t2 0 t2 0 t2 0" fill="none" stroke="#b4b4b4" stroke-width="0.8"/></svg>
<svg class="abs" style="left:290.8px;top:384.1px" width="9" height="4" viewBox="0 0 9 4"><path d="M0.5 2.5 q1 -2 2 0 t2 0 t2 0 t2 0" fill="none" stroke="#b4b4b4" stroke-width="0.8"/></svg>
<svg class="abs" style="left:465.1px;top:384.1px" width="9" height="4" viewBox="0 0 9 4"><path d="M0.5 2.5 q1 -2 2 0 t2 0 t2 0 t2 0" fill="none" stroke="#b4b4b4" stroke-width="0.8"/></svg>
<svg class="abs" style="left:481.7px;top:384.1px" width="9" height="4" viewBox="0 0 9 4"><path d="M0.5 2.5 q1 -2 2 0 t2 0 t2 0 t2 0" fill="none" stroke="#b4b4b4" stroke-width="0.8"/></svg>
<svg class="abs" style="left:548.1px;top:384.1px" width="9" height="4" viewBox="0 0 9 4"><path d="M0.5 2.5 q1 -2 2 0 t2 0 t2 0 t2 0" fill="none" stroke="#b4b4b4" stroke-width="0.8"/></svg>
<div class="cl" style="top:391.58px">regressor<span class="d">.</span><span class="f">add</span><span class="b">(</span><span class="f">Dropout</span><span class="b">(</span><span class="n">0.2</span><span class="b">)</span><span class="b">)</span></div>
<div class="cl" style="top:414.52px"></div>
<div class="fold" style="top:436.16px"></div>
<svg class="abs" style="left:64px;top:443.46px" width="9" height="9" viewBox="0 0 9 9"><rect x="0.5" y="0.5" width="8" height="8" fill="#fff" stroke="#c8c8c8"/><path d="M2 4.5 H7 M4.5 2 V7" stroke="#b0b0b0"/></svg>
<div class="cl" style="top:437.46px">...</div>
<div class="cl" style="top:460.4px">regressor<span class="d">.</span><span class="f">add</span><span class="b">(</span><span class="f">Dense</span><span class="b">(</span><span class="p">units</span> <span class="o">=</span> <span class="n">1</span><span class="b">)</span><span class="b">)</span></div>
<svg class="abs" style="left:282.5px;top:475.9px" width="9" height="4" viewBox="0 0 9 4"><path d="M0.5 2.5 q1 -2 2 0 t2 0 t2 0 t2 0" fill="none" stroke="#b4b4b4" stroke-width="0.8"/></svg>
<svg class="abs" style="left:299.1px;top:475.9px" width="9" height="4" viewBox="0 0 9 4"><path d="M0.5 2.5 q1 -2 2 0 t2 0 t2 0 t2 0" fill="none" stroke="#b4b4b4" stroke-width="0.8"/></svg>
<div class="cl" style="top:483.34px"></div>
<div class="cl" style="top:506.28px">regressor<span class="d">.</span><span class="f">compile</span><span class="b">(</span><span class="p">optimizer</span> <span class="o">=</span> <span class="s">&#x27;adam&#x27;</span><span class="c">,</span> <span class="p">loss</span> <span class="o">=</span> <span class="s">&#x27;mean_squared_error&#x27;</span><span class="b">)</span></div>
<svg class="abs" style="left:299.1px;top:521.8px" width="9" height="4" viewBox="0 0 9 4"><path d="M0.5 2.5 q1 -2 2 0 t2 0 t2 0 t2 0" fill="none" stroke="#b4b4b4" stroke-width="0.8"/></svg>
<svg class="abs" style="left:315.7px;top:521.8px" width="9" height="4" viewBox="0 0 9 4"><path d="M0.5 2.5 q1 -2 2 0 t2 0 t2 0 t2 0" fill="none" stroke="#b4b4b4" stroke-width="0.8"/></svg>
<svg class="abs" style="left:423.6px;top:521.8px" width="9" height="4" viewBox="0 0 9 4"><path d="M0.5 2.5 q1 -2 2 0 t2 0 t2 0 t2 0" fill="none" stroke="#b4b4b4" stroke-width="0.8"/></svg>
<svg class="abs" style="left:440.2px;top:521.8px" width="9" height="4" viewBox="0 0 9 4"><path d="M0.5 2.5 q1 -2 2 0 t2 0 t2 0 t2 0" fill="none" stroke="#b4b4b4" stroke-width="0.8"/></svg>
<div class="cl" style="top:529.22px"></div>
<div class="cl" style="top:552.16px">regressor<span class="d">.</span><span class="f">fit</span><span class="b">(</span>X_train<span class="c">,</span> y_train<span class="c">,</span> <span class="p">epochs</span> <span class="o">=</span> <span class="n">100</span><span class="c">,</span> <span class="p">batch_size</span> <span class="o">=</span> <span class="n">32</span> <span class="b">)</span></div>
<svg class="abs" style="left:390.4px;top:567.7px" width="9" height="4" viewBox="0 0 9 4"><path d="M0.5 2.5 q1 -2 2 0 t2 0 t2 0 t2 0" fill="none" stroke="#b4b4b4" stroke-width="0.8"/></svg>
<svg class="abs" style="left:407.0px;top:567.7px" width="9" height="4" viewBox="0 0 9 4"><path d="M0.5 2.5 q1 -2 2 0 t2 0 t2 0 t2 0" fill="none" stroke="#b4b4b4" stroke-width="0.8"/></svg>
<svg class="abs" style="left:539.8px;top:567.7px" width="9" height="4" viewBox="0 0 9 4"><path d="M0.5 2.5 q1 -2 2 0 t2 0 t2 0 t2 0" fill="none" stroke="#b4b4b4" stroke-width="0.8"/></svg>
<svg class="abs" style="left:556.4px;top:567.7px" width="9" height="4" viewBox="0 0 9 4"><path d="M0.5 2.5 q1 -2 2 0 t2 0 t2 0 t2 0" fill="none" stroke="#b4b4b4" stroke-width="0.8"/></svg>
<svg class="abs" style="left:581.3px;top:567.7px" width="9" height="4" viewBox="0 0 9 4"><path d="M0.5 2.5 q1 -2 2 0 t2 0 t2 0 t2 0" fill="none" stroke="#b4b4b4" stroke-width="0.8"/></svg>
<div class="cl" style="top:575.1px"></div>
<div class="cl" style="top:598.04px"><span class="k">from</span> keras<span class="d">.</span>models <span class="k">import</span> model_from_json</div>
<svg class="abs" style="left:75.0px;top:613.5px" width="34" height="4" viewBox="0 0 34 4"><path d="M0.5 2.5 q1 -2 2 0 t2 0 t2 0 t2 0 t2 0 t2 0 t2 0 t2 0 t2 0 t2 0 t2 0 t2 0 t2 0 t2 0 t2 0 t2 0" fill="none" stroke="#c4c4c4" stroke-width="0.8"/></svg>
<div class="cl" style="top:620.98px">model_json <span class="o">=</span> regressor<span class="d">.</span><span class="f">to_json</span><span class="b">(</span><span class="b">)</span></div>
<div class="cl" style="top:643.92px"><span class="k">with</span> <span class="f">open</span><span class="b">(</span><span class="s">&quot;model.json&quot;</span><span class="c">,</span> <span class="s">&quot;w&quot;</span><span class="b">)</span> <span class="k">as</span> json_file<span class="d">:</span></div>
<div class="cl" style="top:666.86px">    json_file<span class="d">.</span><span class="f">write</span><span class="b">(</span>model_json<span class="b">)</span></div>
<div class="cl" style="top:689.8px">regressor<span class="d">.</span><span class="f">save_weights</span><span class="b">(</span><span class="s">&quot;model.h5&quot;</span><span class="b">)</span></div>
<div class="abs" style="left:75px;top:690px;width:885px;height:11px;background:rgba(195,195,195,0.45);border:1px solid rgba(170,170,170,0.45)"></div>
</div>
<div class="abs" style="left:0;top:700px;width:1168px;height:1px;background:#e6e6e6"></div>
<div class="abs" style="left:1157px;top:195px;width:10px;height:204px;background:#e0e0e0"></div><div class="abs" style="left:1153px;top:94.6px;width:14px;height:2px;background:#f9f4c4"></div><div class="abs" style="left:1153px;top:113.9px;width:14px;height:2px;background:#f9f4c4"></div><div class="abs" style="left:1153px;top:120px;width:14px;height:2px;background:#f9f4c4"></div><div class="abs" style="left:1153px;top:180.4px;width:14px;height:2px;background:#f9f4c4"></div><div class="abs" style="left:1153px;top:221.5px;width:14px;height:2px;background:#f9f4c4"></div><div class="abs" style="left:1153px;top:227.8px;width:14px;height:2px;background:#f9f4c4"></div><div class="abs" style="left:1153px;top:234px;width:14px;height:2px;background:#f9f4c4"></div><div class="abs" style="left:1153px;top:241.4px;width:14px;height:2px;background:#f9f4c4"></div><div class="abs" style="left:1153px;top:247.5px;width:14px;height:2px;background:#f9f4c4"></div><div class="abs" style="left:1153px;top:254.7px;width:14px;height:2px;background:#f9f4c4"></div><div class="abs" style="left:1153px;top:261px;width:14px;height:2px;background:#f9f4c4"></div><div class="abs" style="left:1153px;top:274.7px;width:14px;height:2px;background:#f9f4c4"></div><div class="abs" style="left:1153px;top:288px;width:14px;height:2px;background:#f9f4c4"></div><div class="abs" style="left:1153px;top:301.8px;width:14px;height:2px;background:#f9f4c4"></div><div class="abs" style="left:1153px;top:327.6px;width:14px;height:2px;background:#f9f4c4"></div><div class="abs" style="left:1153px;top:341px;width:14px;height:2px;background:#f9f4c4"></div><div class="abs" style="left:1153px;top:354.7px;width:14px;height:2px;background:#f9f4c4"></div><div class="abs" style="left:1153px;top:368.3px;width:14px;height:2px;background:#f9f4c4"></div><div class="abs" style="left:1153px;top:421px;width:14px;height:2px;background:#f9f4c4"></div><div class="abs" style="left:1153px;top:501.8px;width:14px;height:2px;background:#f9f4c4"></div><div class="abs" style="left:1153px;top:508.2px;width:14px;height:2px;background:#f9f4c4"></div><div class="abs" style="left:1153px;top:523px;width:14px;height:2px;background:#f9f4c4"></div><div class="abs" style="left:1153px;top:529px;width:14px;height:2px;background:#f9f4c4"></div><div class="abs" style="left:1153px;top:548px;width:14px;height:2px;background:#f9f4c4"></div><div class="abs" style="left:1153px;top:609px;width:14px;height:2px;background:#f9f4c4"></div><div class="abs" style="left:1153px;top:615px;width:14px;height:2px;background:#f9f4c4"></div>
<svg class="abs" style="left:1050px;top:6px" width="118" height="16" viewBox="0 0 118 16">
<path d="M7 2.5 L13 13 H1z" fill="#fbf8d8" stroke="#f3eaa0" stroke-width="0.8"/>
<text x="15.5" y="13" font-family="Liberation Sans" font-size="13.5" fill="#b4b4b4">66</text>
<path d="M40 8 L43.5 11.5 L50 3.5" fill="none" stroke="#8fc79a" stroke-width="2"/>
<path d="M39 14 q1.5 -1.5 3 0 t3 0 t3 0 t3 0" fill="none" stroke="#e57373" stroke-width="0.9"/>
<text x="54" y="13" font-family="Liberation Sans" font-size="13.5" fill="#b4b4b4">13</text>
<path d="M81 10.5 L85 6.5 L89 10.5" fill="none" stroke="#6e6e6e" stroke-width="1.3"/>
<path d="M102 6.5 L106 10.5 L110 6.5" fill="none" stroke="#6e6e6e" stroke-width="1.3"/>
</svg>
</div>
<div id="rstrip" class="abs">
<svg class="abs" style="left:4px;top:9px" width="14" height="14" viewBox="0 0 14 14"><g fill="#6e6e6e"><ellipse cx="7" cy="2.5" rx="6" ry="2"/><path d="M1 4.2 Q7 7.2 13 4.2 V6.2 Q7 9.2 1 6.2z"/><path d="M1 7.6 Q7 10.6 13 7.6 V9.6 Q7 12.6 1 9.6z"/><path d="M1 11 Q7 14 13 11 V12 Q7 15 1 12z"/></g></svg>
<div class="abs vr" style="left:3px;top:26px;width:15px;height:33px"><span>数据库</span></div>
<svg class="abs" style="left:5px;top:83px" width="12" height="11" viewBox="0 0 12 11"><g fill="#6e6e6e"><rect x="0" y="0" width="2.5" height="2.5"/><rect x="4" y="0" width="2.5" height="2.5"/><rect x="8" y="0" width="2.5" height="2.5"/><rect x="0" y="4" width="2.5" height="2.5"/><rect x="4" y="4" width="2.5" height="2.5"/><rect x="8" y="4" width="2.5" height="2.5"/><rect x="0" y="8" width="2.5" height="2.5"/><rect x="4" y="8" width="2.5" height="2.5"/><rect x="8" y="8" width="2.5" height="2.5"/></g></svg>
<div class="abs vr" style="left:3px;top:97px;width:15px;height:41px"><span style="font-size:12px">SciView</span></div>
<svg class="abs" style="left:4px;top:155px" width="15" height="15" viewBox="0 0 15 15"><path d="M6.5 2 a4 4 0 0 1 4 4 v3.5 l1.5 1.5 H1 l1.5 -1.5 V6 a4 4 0 0 1 4 -4z M5 12 h3 a1.5 1.5 0 0 1 -3 0z" fill="#6e6e6e"/><circle cx="11.5" cy="3" r="2.6" fill="#e55b5b"/></svg>
<div class="abs vr" style="left:3px;top:176px;width:15px;height:22px"><span>通知</span></div>
</div>
<div id="bbar" class="abs">
<svg class="abs" style="left:33px;top:5.5px" width="11" height="15" viewBox="0 0 11 15"><circle cx="2.5" cy="2" r="1.6" fill="#6e6e6e"/><circle cx="2.5" cy="13" r="1.6" fill="#6e6e6e"/><circle cx="9" cy="3" r="1.6" fill="#6e6e6e"/><path d="M2.5 2 V13 M9 3 V5.5 Q9 8.5 2.5 9.5" fill="none" stroke="#6e6e6e" stroke-width="1.6"/></svg>
<span class="abs bt" style="left:50px">Git</span>
<svg class="abs" style="left:85px;top:5.5px" width="14" height="15" viewBox="0 0 14 15"><path d="M7 1 L13 4.2 L7 7.4 L1 4.2z" fill="#6e6e6e"/><path d="M1 7 L7 10.2 L13 7 M1 9.8 L7 13 L13 9.8" fill="none" stroke="#6e6e6e" stroke-width="1.3"/></svg>
<span class="abs bt" style="left:103px">Python <span class="cj">软件包</span></span>
<svg class="abs" style="left:199px;top:7.5px" width="12" height="11" viewBox="0 0 12 11"><g fill="#6e6e6e"><rect x="0" y="0.5" width="2" height="2"/><rect x="3.5" y="0.5" width="8" height="2"/><rect x="0" y="4.5" width="2" height="2"/><rect x="3.5" y="4.5" width="8" height="2"/><rect x="0" y="8.5" width="2" height="2"/><rect x="3.5" y="8.5" width="8" height="2"/></g></svg>
<span class="abs bt" style="left:215px">TODO</span>
<svg class="abs" style="left:270px;top:6px" width="13" height="13" viewBox="0 0 16 16"><path d="M7.9 0.5C4.1 0.5 4.4 2.1 4.4 2.1V3.8H8V4.3H3C3 4.3 0.5 4 0.5 7.9C0.5 11.7 2.7 11.6 2.7 11.6H4V9.8C4 9.8 3.9 7.6 6.2 7.6H9.8C9.8 7.6 11.9 7.6 11.9 5.6V2.3C11.9 2.3 12.2 0.5 7.9 0.5Z" fill="#6e6e6e"/><path d="M8.1 15.5C11.9 15.5 11.6 13.9 11.6 13.9V12.2H8V11.7H13C13 11.7 15.5 12 15.5 8.1C15.5 4.3 13.3 4.4 13.3 4.4H12V6.2C12 6.2 12.1 8.4 9.8 8.4H6.2C6.2 8.4 4.1 8.4 4.1 10.4V13.7C4.1 13.7 3.8 15.5 8.1 15.5Z" fill="#6e6e6e"/></svg>
<span class="abs bt" style="left:287px">Python <span class="cj">控制台</span></span>
<svg class="abs" style="left:382px;top:6.5px" width="12" height="13" viewBox="0 0 12 13"><circle cx="6" cy="6" r="5.5" fill="#6e6e6e"/><rect x="5" y="2.5" width="2" height="4.5" fill="#fff"/><rect x="5" y="8" width="2" height="1.8" fill="#fff"/></svg>
<span class="abs bt cj" style="left:398px">问题</span>
<svg class="abs" style="left:440px;top:6.5px" width="13" height="12" viewBox="0 0 13 12"><rect x="0.5" y="0.5" width="12" height="10.5" fill="#6e6e6e"/><path d="M2.5 3 L5 5.2 L2.5 7.4" fill="none" stroke="#fff" stroke-width="1.1"/><rect x="6" y="8" width="4" height="1.1" fill="#fff"/></svg>
<span class="abs bt cj" style="left:457px">终端</span>
<svg class="abs" style="left:497px;top:5.5px" width="14" height="14" viewBox="0 0 14 14"><path d="M7 0.8 L12.5 3.9 V10.1 L7 13.2 L1.5 10.1 V3.9z" fill="#6e6e6e"/><path d="M5.3 4.2 L9.6 7 L5.3 9.8z" fill="#fff"/></svg>
<span class="abs bt cj" style="left:515px">服务</span>
</div>
<div id="status" class="abs">
<svg class="abs" style="left:5px;top:3px" width="14" height="14" viewBox="0 0 14 14"><rect x="3.5" y="0.5" width="10" height="10" fill="none" stroke="#6e6e6e" stroke-width="1.1"/><path d="M1 3 V13 H11" fill="none" stroke="#6e6e6e" stroke-width="1.1"/></svg>
<span class="abs st" style="left:1165px">36:8 (699 <span class="cj">字符</span>, 13 <span class="cj">行</span> <span class="cj">换行符</span>)</span>
<span class="abs st" style="left:1345px">CRLF</span>
<span class="abs st" style="left:1387px">UTF-8</span>
<span class="abs st" style="left:1434px">4 <span class="cj">个空格</span></span>
<span class="abs st" style="left:1496px">&lt;<span class="cj">无解释器</span>&gt;</span>
<svg class="abs" style="left:1574px;top:3px" width="14" height="14" viewBox="0 0 14 14"><path d="M2.5 6.5 V4 a3 3 0 0 1 6 0 V5" fill="none" stroke="#6e6e6e" stroke-width="1.4"/><rect x="4.5" y="6.5" width="8.5" height="6.5" fill="#6e6e6e"/></svg>
</div>
<div id="taskbar" class="abs">
<div class="abs" style="left:310px;top:0;width:51px;height:8px;background:#e6f4f7"></div>
<div class="abs" style="left:1595px;top:0;width:1px;height:8px;background:#8aa0a8"></div>
<span class="abs" style="left:1482px;top:2px;font-size:13px;line-height:16px;color:#1a1a1a">10:00:15</span>
</div>
</body></html>
